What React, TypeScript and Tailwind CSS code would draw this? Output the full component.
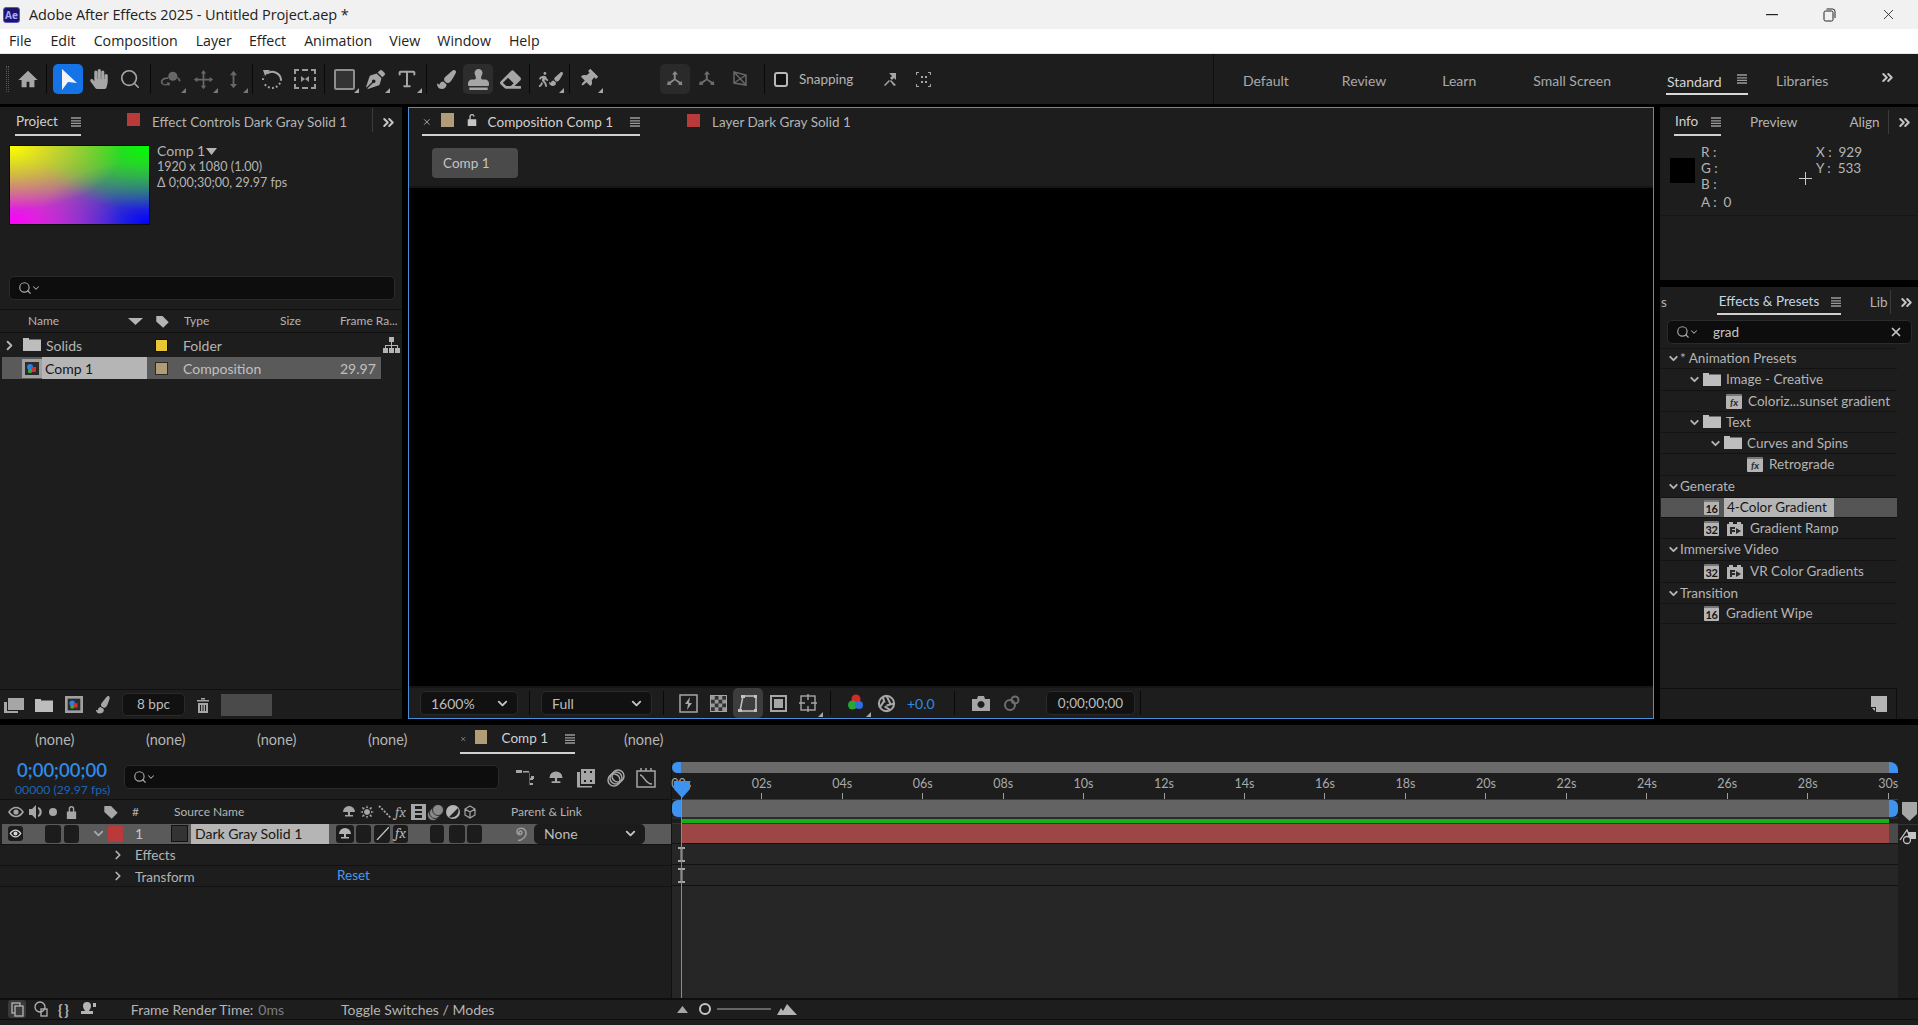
import type { ReactNode } from 'react'
import { ChevronDown, ChevronRight, ChevronsRight, Search, Type, X } from 'lucide-react'
import { FaEraser, FaHandPaper, FaPaintBrush, FaPenNib, FaStamp, FaThumbtack, FaWalking } from 'react-icons/fa'

const PANEL_TEXT = 'text-[#b4b4b4]'

function Ico({ size = 20, vb = '0 0 24 24', className = '', children }: { size?: number; vb?: string; className?: string; children: ReactNode }) {
  return (
    <svg width={size} height={size} viewBox={vb} fill="currentColor" className={`shrink-0 ${className}`}>
      {children}
    </svg>
  )
}

function Ham({ className = '' }: { className?: string }) {
  return (
    <svg width="10" height="10" viewBox="0 0 10 10" className={`shrink-0 ${className}`} stroke="#9a9a9a" strokeWidth="1.3">
      <path d="M0 1h10M0 3.8h10M0 6.4h10M0 9h10" />
    </svg>
  )
}

function Sep({ className = '', short }: { className?: string; short?: boolean }) {
  return <div className={`w-px ${short ? 'h-[24px]' : 'h-[30px]'} bg-[#090909] shrink-0 ${className}`} />
}

function Tool({ className = '', tri, dim, children }: { className?: string; tri?: boolean; dim?: boolean; children: ReactNode }) {
  return (
    <div className={`relative w-[30px] h-[30px] flex items-center justify-center shrink-0 rounded-[5px] ${dim ? 'text-[#686868]' : 'text-[#a6a6a6]'} ${className}`}>
      {children}
      {tri && (
        <svg width="5" height="5" viewBox="0 0 5 5" className="absolute right-0 bottom-[1px]" fill={dim ? '#777' : '#a6a6a6'}>
          <polygon points="5,0 5,5 0,5" />
        </svg>
      )}
    </div>
  )
}

function Folder({ className = '' }: { className?: string }) {
  return (
    <svg width="18" height="14" viewBox="0 0 18 14" fill="#bdbdbd" className={`shrink-0 ${className}`}>
      <path d="M0 1h6v1.500h12V14H0z" />
    </svg>
  )
}

function Badge({ text }: { text: string }) {
  return (
    <span className="w-[15px] h-[15px] shrink-0 bg-[#b4b4b4] rounded-[1px] text-[#141414] text-[11px] leading-[13px] font-bold text-center tracking-[-0.5px] border-t-2 border-[#777]">
      {text}
    </span>
  )
}

function FxBox({ className = '' }: { className?: string }) {
  return (
    <span className={`w-[16px] h-[15px] shrink-0 bg-[#b4b4b4] rounded-[1px] text-[#2a2a2a] text-[10px] leading-[13px] italic font-bold text-center border-t-2 border-[#777] ${className}`}>
      fx
    </span>
  )
}

function PresetIcon({ className = '' }: { className?: string }) {
  return (
    <svg width="16" height="15" viewBox="0 0 16 15" className={`shrink-0 ${className}`}>
      <path d="M0 3h2V1h4v2h4V1h4v2h2v12H0z" fill="#b4b4b4" />
      <path d="M3 6h5v2H5v1h3v2H5v2H3z" fill="#2a2a2a" />
      <polygon points="9,7 14,10 9,13" fill="#2a2a2a" />
    </svg>
  )
}

function CompIcon({ className = '' }: { className?: string }) {
  return (
    <svg width="20" height="19" viewBox="0 0 20 19" className={`shrink-0 ${className}`}>
      <rect width="20" height="19" fill="#a0a0a0" />
      <rect x="3" y="3" width="14" height="13" fill="#2b2b2b" />
      <circle cx="8" cy="8" r="3" fill="#2f7fe0" />
      <rect x="9" y="8" width="5" height="5" fill="#d23030" />
      <circle cx="8" cy="12" r="2.200" fill="#35a845" />
    </svg>
  )
}

function Swatch({ color, className = '' }: { color: string; className?: string }) {
  return <div className={`shrink-0 ${color} ${className}`} />
}

function Dropdown({ className = '', label }: { className?: string; label: string }) {
  return (
    <div className={`shrink-0 flex items-center justify-between pl-[10px] pr-[7px] rounded-[5px] text-[14px] text-[#bdbdbd] ${className}`}>
      <span>{label}</span>
      <ChevronDown size={15} strokeWidth={3} className="text-[#c4c4c4]" />
    </div>
  )
}

function TitleBar() {
  return (
    <div className="h-[29px] bg-[#f1f1f1] flex items-center shrink-0 font-['Open_Sans',sans-serif] text-[#222]">
      <div className="w-[17px] h-[16px] ml-[3px] rounded-[3px] bg-[#1c1466] border border-[#5d55c8] text-[#a9a6ff] text-[10px] font-bold leading-[14px] text-center">Ae</div>
      <span className="ml-[9px] text-[14.500px] tracking-[-0.1px]">Adobe After Effects 2025 - Untitled Project.aep *</span>
      <div className="ml-auto flex items-center">
        <svg width="12" height="2" className="mr-[45px]"><rect width="12" height="1.200" fill="#222" /></svg>
        <svg width="13" height="14" viewBox="0 0 13 14" fill="none" stroke="#222" className="mr-[44px]">
          <rect x="1" y="3" width="9" height="10" rx="1.500" />
          <path d="M3.500 1h6a2.500 2.500 0 0 1 2.500 2.500V10" />
        </svg>
        <X size={17} strokeWidth={1.200} className="mr-[21px] text-[#222]" />
      </div>
    </div>
  )
}

const MENU = [
  ['File', 'ml-[9px]'],
  ['Edit', 'ml-[19px]'],
  ['Composition', 'ml-[18px]'],
  ['Layer', 'ml-[18px]'],
  ['Effect', 'ml-[17px]'],
  ['Animation', 'ml-[18px]'],
  ['View', 'ml-[17px]'],
  ['Window', 'ml-[17px]'],
  ['Help', 'ml-[18px]'],
]

function MenuBar() {
  return (
    <div className="h-[25px] bg-white border-b border-[#e6e6e6] flex items-center shrink-0 font-['Open_Sans',sans-serif] text-[14.200px] text-[#222] pb-[1px]">
      {MENU.map(([label, cls]) => (
        <span key={label} className={cls}>{label}</span>
      ))}
    </div>
  )
}

function Axis({ dim }: { dim?: boolean }) {
  return (
    <Ico size={20} vb="0 0 20 20" className={dim ? 'text-[#6f6f6f]' : 'text-[#8a8a8a]'}>
      <path d="M10 2l3 3.500h-2.300V10l4.800 3 1-1.300.9 4.300-4.400-.2 1-1.400L10 11.300l-4.500 3.100 1 1.400L2.100 16l.9-4.300 1 1.300 4.800-3V5.500H7z" />
    </Ico>
  )
}

function Toolbar() {
  return (
    <div className="h-[50px] bg-[#1d1d1d] flex items-center shrink-0 text-[#a6a6a6]">
      <div className="ml-[6px] w-[3px] h-[26px] border-l border-r border-dotted border-[#555] shrink-0" />
      <Tool className="ml-[4px]">
        <Ico size={22}><path d="M12 3 1.500 13H5v8h5.500v-6h3v6H19v-8h3.500z" /></Ico>
      </Tool>
      <Sep className="ml-[3px]" />
      <Tool className="ml-[6px] bg-[#1473e6]">
        <Ico size={24} className="text-[#f4f4f4]"><polygon points="6,2 21,16 12,15 6,23" /></Ico>
      </Tool>
      <Tool className="ml-[1px]"><FaHandPaper size={20} /></Tool>
      <Tool className="ml-[1px]"><Search size={22} strokeWidth={1.800} /></Tool>
      <Sep className="ml-[5px]" />
      <Tool tri dim className="ml-[5px]">
        <Ico size={22}>
          <circle cx="14" cy="9" r="5" />
          <path d="M9 12c-5 0-7 2-6 4s4 2 5 1l-1-1.500 4 .5-1 4-1-1.500C5 20 0 18 1 14c1-3 4-4 8-4zM19 10c3 1 4 3 3 5l-2-1c.5-1 0-2-2-3z" />
        </Ico>
      </Tool>
      <Tool tri dim className="ml-[2px]">
        <Ico size={21}><path d="M12 1l3 4h-2v6h6V9l4 3-4 3v-2h-6v6h2l-3 4-3-4h2v-6H5v2l-4-3 4-3v2h6V5H9z" /></Ico>
      </Tool>
      <Tool tri dim>
        <Ico size={21}><path d="M12 2l4 5h-3v10h3l-4 5-4-5h3V7H8z" /></Ico>
      </Tool>
      <Sep className="ml-[4px]" />
      <Tool className="ml-[4px]">
        <svg width="24" height="24" viewBox="0 0 24 24" fill="none" stroke="#a6a6a6" strokeWidth="2">
          <path d="M7 6.500A9 9 0 0 1 21 12" />
          <path d="M21 12a9 9 0 0 1-17 4" strokeDasharray="1.800 2.200" />
          <path d="M3 13a9 9 0 0 1 1-4" strokeDasharray="1.800 2.200" />
          <polygon points="3,3 10,3 5,9" fill="#a6a6a6" stroke="none" />
        </svg>
      </Tool>
      <Tool className="ml-[3px]">
        <svg width="24" height="22" viewBox="0 0 24 22" fill="#9a9a9a">
          <path d="M1 1h5v2H3v3H1zM18 1h5v5h-2V3h-3zM1 16h2v3h3v2H1zM21 16h2v5h-5v-2h3zM9 1h6v2H9zM9 19h6v2H9zM1 9h2v4H1zM21 9h2v4h-2z" />
          <path d="M8 8l4 3-4 3zM16 8l-4 3 4 3z" />
        </svg>
      </Tool>
      <Sep className="ml-[4px]" />
      <Tool tri className="ml-[4px]">
        <div className="w-[21px] h-[21px] bg-[#333] border-2 border-[#8e8e8e] rounded-[2px]" />
      </Tool>
      <Tool tri className="ml-[1px]"><FaPenNib size={19} /></Tool>
      <Tool tri className="ml-[2px]"><Type size={22} strokeWidth={2.200} /></Tool>
      <Sep className="ml-[4px]" />
      <Tool className="ml-[4px]"><FaPaintBrush size={19} /></Tool>
      <Tool className="ml-[2px] bg-[#2d2d2d]"><FaStamp size={21} /></Tool>
      <Tool className="ml-[2px]"><FaEraser size={21} /></Tool>
      <Sep className="ml-[4px]" />
      <Tool tri className="ml-[4px]">
        <FaWalking size={15} className="mr-[-2px]" />
        <FaPaintBrush size={14} />
      </Tool>
      <Sep className="ml-[5px]" />
      <Tool tri className="ml-[3px]"><FaThumbtack size={18} className="rotate-45" /></Tool>

      <Tool className="ml-[57px] bg-[#2a2a2a]"><Axis /></Tool>
      <Tool className="ml-[2px]"><Axis dim /></Tool>
      <Tool className="ml-[3px]">
        <svg width="18" height="18" viewBox="0 0 18 18" fill="none" stroke="#666" strokeWidth="1.500">
          <path d="M3 2l12 3v10L3 13zM3 13l12-8M3 2l12 13" />
        </svg>
      </Tool>
      <Sep className="ml-[9px]" />
      <div className="ml-[9px] w-[14px] h-[15px] bg-[#111] border-2 border-[#b8b8b8] rounded-[3px] shrink-0" />
      <span className={`ml-[11px] w-[60px] text-[13.5px] ${PANEL_TEXT}`}>Snapping</span>
      <Tool className="ml-[16px]">
        <Ico size={16} vb="0 0 16 16"><path d="M2 14l5-5 1 1-5 5zM14 14l-5-5-1 1 4 5zM7 2h7v7l-2-2-2 2-2-2 2-2z" /></Ico>
      </Tool>
      <Tool className="ml-[3px]">
        <Ico size={15} vb="0 0 15 15">
          <path d="M0 0h3v1H1v2H0zM12 0h3v3h-1V1h-2zM0 12h1v2h2v1H0zM14 12h1v3h-3v-1h2zM5 4h2v2H5zM9 4h2v2H9zM5 9h2v2H5zM9 9h2v2H9z" />
        </Ico>
      </Tool>

      <div className="ml-auto w-[705px] h-full pt-[3px] border-l border-[#0e0e0e] flex items-center text-[14px] text-[#a9a9a9] shrink-0">
        <span className="ml-[29px]">Default</span>
        <span className="ml-[53px]">Review</span>
        <span className="ml-[56px]">Learn</span>
        <span className="ml-[57px]">Small Screen</span>
        <div className="ml-[55px] w-[82px] h-[26px] mt-[3px] flex items-center justify-between border-b-2 border-[#d8d8d8] pl-[1px] text-[#d2d2d2] shrink-0">
          <span>Standard</span>
          <Ham className="mb-[4px] mr-[1px]" />
        </div>
        <span className="ml-[28px]">Libraries</span>
        <ChevronsRight size={17} strokeWidth={2.800} className="ml-[51px] mb-[6px] text-[#c4c4c4]" />
      </div>
    </div>
  )
}

function PanelTabs({ children }: { children: ReactNode }) {
  return <div className={`h-[29px] flex items-start shrink-0 text-[13.5px] ${PANEL_TEXT}`}>{children}</div>
}

function ActiveTab({ className = '', children }: { className?: string; children: ReactNode }) {
  return (
    <div className={`flex items-center border-b-2 border-[#d0d0d0] text-[#d0d0d0] shrink-0 ${className}`}>
      {children}
    </div>
  )
}

function ProjectPanel() {
  return (
    <div className="w-[402px] h-[612px] bg-[#1d1d1d] flex flex-col shrink-0">
      <PanelTabs>
        <ActiveTab className="h-[29px] pt-[2px] ml-[15px] w-[66px] pl-[1px] justify-between">
          <span>Project</span>
          <Ham />
        </ActiveTab>
        <div className="ml-[46px] h-[30px] flex items-center">
          <Swatch color="bg-[#b83a3a]" className="w-[13px] h-[13px] mb-[5px]" />
          <span className="ml-[12px]">Effect Controls Dark Gray Solid 1</span>
        </div>
        <div className="ml-[25px] mt-[1px] w-px h-[24px] bg-[#3a3a3a]" />
        <ChevronsRight size={17} strokeWidth={2.800} className="ml-[7px] mt-[7px] text-[#c4c4c4]" />
      </PanelTabs>
      <div className="h-[140px] flex shrink-0 pt-[9px]">
        <div className="ml-[9px] w-[141px] h-[80px] shrink-0 border border-[#0c0c0c] bg-[#808080] bg-[radial-gradient(ellipse_at_0%_0%,#ffff00_0%,transparent_58%),radial-gradient(ellipse_at_100%_0%,#00ff00_0%,transparent_58%),radial-gradient(ellipse_at_0%_100%,#ff00ff_0%,transparent_58%),radial-gradient(ellipse_at_100%_100%,#0000ff_0%,transparent_58%)]" />
        <div className={`ml-[7px] -mt-[2px] text-[12.5px] leading-[16px] ${PANEL_TEXT}`}>
          <div className="flex items-center text-[14px]">Comp 1<svg width="11" height="7" className="ml-[1px]" fill="#b4b4b4"><polygon points="0,0 11,0 5.500,7" /></svg></div>
          <div>1920 x 1080 (1.00)</div>
          <div>Δ 0;00;30;00, 29.97 fps</div>
        </div>
      </div>
      <div className="ml-[9px] w-[386px] h-[24px] rounded-[5px] bg-[#0d0d0d] border border-[#2a2a2a] flex items-center pl-[8px] shrink-0 text-[#a6a6a6]">
        <Search size={14} />
        <ChevronDown size={10} strokeWidth={2.500} className="ml-[-1px]" />
      </div>
      <div className={`mt-[9px] h-[24px] border-t border-b border-[#101010] flex items-center shrink-0 text-[12px] ${PANEL_TEXT}`}>
        <span className="ml-[28px] w-[100px]">Name</span>
        <svg width="15" height="7" fill="#b4b4b4"><polygon points="0,0 15,0 7.500,7" /></svg>
        <Ico size={15} className="ml-[12px]"><path d="M2 3h10l10 10-9 9L2 12z" /></Ico>
        <span className="ml-[14px] w-[96px]">Type</span>
        <span className="w-[60px]">Size</span>
        <span>Frame Ra...</span>
      </div>
      <div className={`h-[24px] flex items-center shrink-0 text-[14px] ${PANEL_TEXT}`}>
        <ChevronRight size={15} strokeWidth={3} className="ml-[2px]" />
        <Folder className="ml-[6px] mb-[2px]" />
        <span className="ml-[5px] w-[109px]">Solids</span>
        <Swatch color="bg-[#e8c832]" className="w-[13px] h-[13px] border border-[#111]" />
        <span className="ml-[15px] w-[200px]">Folder</span>
        <svg width="17" height="16" viewBox="0 0 17 16" fill="#b4b4b4">
          <path d="M6 0h5v5H9v3h6v3h2v5h-5v-5h2V9H9v2h2v5H6v-5h2V9H3v2h2v5H0v-5h2V8h6V5H6z" />
        </svg>
      </div>
      <div className="ml-[2px] w-[379px] h-[22px] bg-[#5a5a5a] flex items-center shrink-0 text-[14px] text-[#c0c0c0]">
        <CompIcon className="ml-[20px]" />
        <div className="w-[105px] h-full bg-[#b5b5b5] text-[#151515] flex items-center pl-[3px] shrink-0">Comp 1</div>
        <Swatch color="bg-[#b09d77]" className="w-[13px] h-[13px] ml-[8px] border border-[#2a2a2a]" />
        <span className="ml-[15px] w-[157px]">Composition</span>
        <span>29.97</span>
      </div>
      <div className="mt-auto h-[30px] border-t border-[#101010] flex items-center shrink-0 text-[#a6a6a6]">
        <Ico size={20} className="ml-[4px]" vb="0 0 20 20"><path d="M0 7h3v9h11v2H0zM4 3h16v12H4z" /></Ico>
        <Folder className="ml-[11px]" />
        <CompIcon className="ml-[11px] scale-90" />
        <FaPaintBrush size={16} className="ml-[11px] rotate-[-10deg]" />
        <div className="ml-[11px] w-[63px] h-[23px] bg-[#111] border border-[#2a2a2a] rounded-[5px] text-[13.5px] text-[#bdbdbd] flex items-center justify-center shrink-0">8 bpc</div>
        <Ico size={16} vb="0 0 16 16" className="ml-[10px]"><path d="M2 3h12v1.500H2zM6 1h4v1.500H6zM3 6h10v10H3zM5 8v6h1V8zM7.500 8v6h1V8zM10 8v6h1V8z" /></Ico>
        <div className="ml-[10px] w-[51px] h-[22px] bg-[#4a4a4a] shrink-0" />
      </div>
    </div>
  )
}

function CompPanel() {
  return (
    <div className="w-[1246px] h-[612px] bg-[#1d1d1d] border border-[#4b8fd8] flex flex-col shrink-0">
      <PanelTabs>
        <ActiveTab className="h-[28px] pt-[2px] ml-[13px] w-[218px]">
          <X size={10} strokeWidth={2.500} className="ml-[0px] text-[#a6a6a6]" />
          <Swatch color="bg-[#b09d77]" className="w-[13px] h-[14px] ml-[9px] mb-[4px]" />
          <Ico size={12} vb="0 0 12 14" className="ml-[12px] mb-[4px] text-[#c4c4c4]"><path d="M1 6h10v8H1zM3 6V3a3 3 0 0 1 6 0h-1.500a1.500 1.500 0 0 0-3 0v3z" /></Ico>
          <span className="ml-[10px]">Composition Comp 1</span>
          <Ham className="ml-[17px]" />
        </ActiveTab>
        <div className="ml-[47px] h-[29px] flex items-center">
          <Swatch color="bg-[#b83a3a]" className="w-[13px] h-[13px] mb-[5px]" />
          <span className="ml-[12px]">Layer Dark Gray Solid 1</span>
        </div>
      </PanelTabs>
      <div className="h-[49px] shrink-0 pt-[11px] pl-[23px]">
        <div className="w-[86px] h-[30px] bg-[#4a4a4a] rounded-[4px] flex items-center pl-[11px] text-[13.5px] text-[#c4c4c4]">Comp 1</div>
      </div>
      <div className="h-[2px] bg-[#151515] shrink-0" />
      <div className="flex-1 bg-black" />
      <div className="h-[2px] bg-[#151515] shrink-0" />
      <div className="h-[30px] flex items-center shrink-0 text-[#a6a6a6]">
        <Dropdown label="1600%" className="h-[24px] bg-[#111] border border-[#2a2a2a] ml-[11px] w-[98px]" />
        <Sep short className="ml-[11px]" />
        <Dropdown label="Full" className="h-[24px] bg-[#111] border border-[#2a2a2a] ml-[11px] w-[111px]" />
        <Sep short className="ml-[11px]" />
        <Tool className="ml-[9px]">
          <svg width="19" height="19" viewBox="0 0 19 19" fill="none" stroke="#a6a6a6" strokeWidth="1.500">
            <rect x="1" y="1" width="17" height="17" />
            <path d="M11 3L6 10h3l-1 6 5-7h-3z" fill="#a6a6a6" stroke="none" />
          </svg>
        </Tool>
        <Tool>
          <svg width="17" height="17" viewBox="0 0 4 4" className="border border-[#a6a6a6]">
            <rect width="4" height="4" fill="#333" />
            <path d="M0 0h1v1H0zM2 0h1v1H2zM1 1h1v1H1zM3 1h1v1H3zM0 2h1v1H0zM2 2h1v1H2zM1 3h1v1H1zM3 3h1v1H3z" fill="#999" />
          </svg>
        </Tool>
        <Tool className="bg-[#3d3d3d]">
          <svg width="20" height="19" viewBox="0 0 20 19" fill="none" stroke="#c2c2c2" strokeWidth="1.500">
            <path d="M5 2h13v15H2z" />
            <path d="M3 1h4v3H3zM16 1h3v3h-3zM0 15h4v3H0zM16 15h3v3h-3z" fill="#c2c2c2" stroke="none" />
          </svg>
        </Tool>
        <Tool>
          <div className="w-[17px] h-[17px] border-2 border-[#a6a6a6] flex items-center justify-center"><div className="w-[9px] h-[9px] bg-[#a6a6a6]" /></div>
        </Tool>
        <Tool tri>
          <svg width="18" height="18" viewBox="0 0 18 18" fill="none" stroke="#a6a6a6" strokeWidth="1.400">
            <rect x="2" y="2" width="14" height="14" />
            <path d="M9 0v6M9 12v6M0 9h6M12 9h6" />
          </svg>
        </Tool>
        <Sep short className="ml-[7px]" />
        <Tool tri className="ml-[10px]">
          <svg width="20" height="20" viewBox="0 0 20 20">
            <circle cx="10" cy="6" r="4.500" fill="#d42a2a" />
            <circle cx="6.500" cy="12" r="4.500" fill="#27a537" />
            <circle cx="13" cy="12" r="4" fill="#2b6fe0" />
          </svg>
        </Tool>
        <Tool>
          <svg width="19" height="19" viewBox="0 0 20 20" fill="none" stroke="#a6a6a6" strokeWidth="2.200">
            <circle cx="10" cy="10" r="8" />
            <path d="M10 2l4 8M18 10l-8 2M14 17l-6-4M3 14l4-6M6 3l2 6" />
          </svg>
        </Tool>
        <span className="ml-[6px] w-[40px] text-[14px] text-[#2f8be6]">+0.0</span>
        <Sep short className="ml-[7px]" />
        <Tool className="ml-[11px]">
          <svg width="18" height="15" viewBox="0 0 18 15" fill="#a6a6a6">
            <path fillRule="evenodd" d="M0 3h5l1-3h6l1 3h5v12H0zM9 5a3.500 3.500 0 1 0 .01 0z" />
          </svg>
        </Tool>
        <Tool className="ml-[1px]">
          <svg width="18" height="18" viewBox="0 0 18 18" fill="none" stroke="#6e6e6e" strokeWidth="2">
            <circle cx="7" cy="11" r="5" />
            <circle cx="12" cy="6" r="3.500" />
          </svg>
        </Tool>
        <div className="ml-[19px] w-[89px] h-[24px] bg-[#111] border border-[#2a2a2a] rounded-[5px] flex items-center justify-center text-[13.500px] text-[#bdbdbd] shrink-0">0;00;00;00</div>
        <Sep short className="ml-[5px]" />
      </div>
    </div>
  )
}

function InfoPanel() {
  return (
    <div className="h-[173px] bg-[#1d1d1d] flex flex-col shrink-0">
      <PanelTabs>
        <ActiveTab className="h-[29px] pt-[2px] ml-[14px] w-[47px] pl-[1px] justify-between">
          <span>Info</span>
          <Ham />
        </ActiveTab>
        <span className="ml-[29px] h-[28px] leading-[30px]">Preview</span>
        <span className="ml-[52px] h-[28px] leading-[30px]">Align</span>
        <div className="ml-[8px] mt-[3px] w-px h-[24px] bg-[#3a3a3a]" />
        <ChevronsRight size={17} strokeWidth={2.800} className="ml-[7px] mt-[7px] text-[#c4c4c4]" />
      </PanelTabs>
      <div className={`relative h-[80px] flex text-[13.5px] leading-[16px] pt-[8px] border-b border-[#161616] ${PANEL_TEXT}`}>
        <div className="ml-[10px] mt-[14px] w-[25px] h-[25px] bg-black shrink-0" />
        <div className="ml-[6px] w-[115px] shrink-0">
          <div>R :</div>
          <div>G :</div>
          <div>B :</div>
          <div className="mt-[2px]">A :&nbsp; 0</div>
        </div>
        <div>
          <div>X :&nbsp; 929</div>
          <div>Y :&nbsp; 533</div>
        </div>
        <svg width="13" height="13" className="absolute left-[139px] top-[36px]" stroke="#c8c8c8"><path d="M6.500 0v13M0 6.500h13" /></svg>
      </div>
    </div>
  )
}

const TREE = [
  { h: 'h-[20px]', cls: 'pl-[6px]', chev: true, text: '* Animation Presets', textCls: '' },
  { h: 'h-[22px]', cls: 'pl-[27px]', chev: true, folder: true, text: 'Image - Creative', textCls: 'ml-[5px]' },
  { h: 'h-[21px]', cls: 'pl-[65px]', fx: true, text: 'Coloriz...sunset gradient', textCls: 'ml-[6px]' },
  { h: 'h-[21px]', cls: 'pl-[27px]', chev: true, folder: true, text: 'Text', textCls: 'ml-[5px]' },
  { h: 'h-[21px]', cls: 'pl-[48px]', chev: true, folder: true, text: 'Curves and Spins', textCls: 'ml-[5px]' },
  { h: 'h-[22px]', cls: 'pl-[86px]', fx: true, text: 'Retrograde', textCls: 'ml-[6px]' },
  { h: 'h-[22px]', cls: 'pl-[6px]', chev: true, text: 'Generate', textCls: '' },
  { h: 'h-[20px]', cls: 'pl-[43px]', badge: '16', text: '4-Color Gradient', selected: true },
  { h: 'h-[21px]', cls: 'pl-[43px]', badge: '32', preset: true, text: 'Gradient Ramp', textCls: 'ml-[7px]' },
  { h: 'h-[22px]', cls: 'pl-[6px]', chev: true, text: 'Immersive Video', textCls: '' },
  { h: 'h-[22px]', cls: 'pl-[43px]', badge: '32', preset: true, text: 'VR Color Gradients', textCls: 'ml-[7px]' },
  { h: 'h-[21px]', cls: 'pl-[6px]', chev: true, text: 'Transition', textCls: '' },
  { h: 'h-[20px]', cls: 'pl-[43px]', badge: '16', text: 'Gradient Wipe', textCls: 'ml-[7px]' },
]

function EffectsPanel() {
  return (
    <div className="flex-1 bg-[#1d1d1d] flex flex-col min-h-0">
      <PanelTabs>
        <span className="ml-[1px] h-[28px] leading-[30px]">s</span>
        <ActiveTab className="h-[28px] pt-[3px] ml-[50px] w-[124px] pl-[2px] justify-between">
          <span className="text-[#c3d5e6]">Effects &amp; Presets</span>
          <Ham />
        </ActiveTab>
        <span className="ml-[29px] w-[20px] h-[28px] leading-[30px]">Lib</span>
        <div className="mt-[3px] w-px h-[24px] bg-[#3a3a3a]" />
        <ChevronsRight size={17} strokeWidth={2.800} className="ml-[7px] mt-[7px] text-[#c4c4c4]" />
      </PanelTabs>
      <div className="ml-[7px] mr-[6px] mt-[4px] h-[24px] rounded-[5px] bg-[#0d0d0d] border border-[#2a2a2a] flex items-center pl-[8px] pr-[8px] shrink-0 text-[#a6a6a6]">
        <Search size={14} />
        <ChevronDown size={10} strokeWidth={2.500} className="ml-[-1px]" />
        <span className="ml-[14px] text-[13.5px] text-[#c4c4c4]">grad</span>
        <X size={14} strokeWidth={3} className="ml-auto text-[#c4c4c4]" />
      </div>
      <div className="mt-[4px] w-[236px] ml-[1px] border-t border-[#121212] text-[13.500px] text-[#b4b4b4]">
        {TREE.map((row) => (
          <div key={row.text} className={`${row.h} ${row.cls} ${row.selected ? 'bg-[#555]' : ''} flex items-center border-b border-[#121212]`}>
            {row.chev && <ChevronDown size={13} strokeWidth={3.500} className="shrink-0" />}
            {row.folder && <Folder className="ml-[2px] mb-[2px]" />}
            {row.fx && <FxBox />}
            {row.badge && <Badge text={row.badge} />}
            {row.preset && <PresetIcon className="ml-[8px]" />}
            {row.selected ? (
              <span className="ml-[5px] h-full w-[110px] bg-[#b5b5b5] text-[#161616] pl-[3px] flex items-center">{row.text}</span>
            ) : (
              <span className={row.textCls}>{row.text}</span>
            )}
          </div>
        ))}
      </div>
      <div className="mt-auto w-[237px] h-[31px] border-t border-r border-[#0e0e0e] flex items-center justify-end pr-[9px] shrink-0">
        <svg width="16" height="16" viewBox="0 0 16 16" fill="#b4b4b4">
          <path d="M0 0h16v16H5V11H0zM1 12h3v3z" />
        </svg>
      </div>
    </div>
  )
}

function TimelineTabs() {
  return (
    <div className={`h-[35px] flex items-start shrink-0 text-[14.500px] ${PANEL_TEXT}`}>
      <span className="ml-[35px] w-[111px] leading-[30px]">(none)</span>
      <span className="w-[111px] leading-[30px]">(none)</span>
      <span className="w-[111px] leading-[30px]">(none)</span>
      <span className="w-[92px] leading-[30px]">(none)</span>
      <div className="h-[29px] w-[115px] flex items-center border-b-2 border-[#d0d0d0] text-[13.5px] text-[#d0d0d0] shrink-0">
        <X size={10} strokeWidth={2.500} className="text-[#a6a6a6]" />
        <Swatch color="bg-[#b09d77]" className="ml-[8px] mb-[3px] w-[12px] h-[14px]" />
        <span className="ml-[15px]">Comp 1</span>
        <Ham className="ml-[17px]" />
      </div>
      <span className="ml-[49px] leading-[30px]">(none)</span>
    </div>
  )
}

function SwitchBox({ className = '', children }: { className?: string; children?: ReactNode }) {
  return <div className={`bg-[#1c1c1c] rounded-[3px] flex items-center justify-center shrink-0 text-[#b4b4b4] ${className}`}>{children}</div>
}

function ShyIcon({ className = '' }: { className?: string }) {
  return (
    <Ico size={16} vb="0 0 16 16" className={className}>
      <path d="M2 8a6 6 0 0 1 12 0H9v3h3v1.500H4V11h3V8z" />
    </Ico>
  )
}

function LayerControls() {
  return (
    <>
      <div className="h-[39px] flex items-center shrink-0">
        <div className="ml-[15px] w-[100px] pb-[2px] shrink-0 leading-none">
          <div className="text-[18.500px] font-semibold text-[#2f8be6] pl-[2px]">0;00;00;00</div>
          <div className="mt-[4px] text-[12.200px] text-[#1c65b5]">00000 (29.97 fps)</div>
        </div>
        <div className="ml-[9px] mb-[6px] w-[375px] h-[24px] rounded-[5px] bg-[#0d0d0d] border border-[#2a2a2a] flex items-center pl-[8px] shrink-0 text-[#a6a6a6]">
          <Search size={14} />
          <ChevronDown size={10} strokeWidth={2.500} className="ml-[-1px]" />
        </div>
        <div className="flex items-center mb-[4px] text-[#a6a6a6]">
          <Tool className="ml-[12px]">
            <svg width="20" height="18" viewBox="0 0 20 18" fill="#a6a6a6"><path d="M0 1h6v3H0zM7 2h6v1.500h1V9h3v2h-3v3h3v2h-3.500V3.500H7zM15 7h3v3h-3z" /></svg>
          </Tool>
          <Tool><ShyIcon className="scale-110" /></Tool>
          <Tool>
            <svg width="20" height="20" viewBox="0 0 20 20" fill="#a6a6a6"><path d="M5 1h14v15H5zM1 4h3v14h12v1.500H1zM8 3v2h2V3zM14 3v2h2V3zM8 12v2h2v-2zM14 12v2h2v-2zM8 7h8v3H8z" /></svg>
          </Tool>
          <Tool>
            <svg width="20" height="20" viewBox="0 0 20 20" fill="none" stroke="#a6a6a6" strokeWidth="1.500"><circle cx="8" cy="12" r="6" /><circle cx="10" cy="10" r="6" /><circle cx="12" cy="8" r="6" /></svg>
          </Tool>
          <Tool>
            <svg width="20" height="20" viewBox="0 0 20 20" fill="none" stroke="#a6a6a6" strokeWidth="1.500"><rect x="1" y="3" width="18" height="16" /><path d="M4 7c4 0 5 9 12 9M5 0v3M10 0v3M15 0v3" /></svg>
          </Tool>
        </div>
      </div>
      <div className={`h-[25px] border-t border-[#101010] flex items-center shrink-0 text-[12px] ${PANEL_TEXT}`}>
        <svg width="16" height="12" viewBox="0 0 16 12" fill="none" stroke="#a6a6a6" strokeWidth="1.600" className="ml-[8px]"><path d="M1 6c4-6 10-6 14 0-4 6-10 6-14 0z" /><circle cx="8" cy="6" r="1.800" fill="#a6a6a6" /></svg>
        <Ico size={14} vb="0 0 14 14" className="ml-[5px] text-[#a6a6a6]"><path d="M7 0v14L3 10H0V4h3zM9 2c5 1 5 9 0 10v-2c2-1 2-5 0-6z" /></Ico>
        <div className="ml-[6px] w-[8px] h-[8px] rounded-full bg-[#a6a6a6]" />
        <Ico size={13} vb="0 0 12 14" className="ml-[8px] text-[#a6a6a6]"><path d="M1 6h10v8H1zM3 6V3a3 3 0 0 1 6 0v3H7.500V3a1.500 1.500 0 0 0-3 0v3z" /></Ico>
        <Ico size={16} className="ml-[25px] text-[#a6a6a6]"><path d="M2 3h10l10 10-9 9L2 12z" /></Ico>
        <span className="ml-[13px] w-[42px]">#</span>
        <span className="w-[167px]">Source Name</span>
        <ShyIcon className="text-[#a6a6a6]" />
        <Ico size={14} vb="0 0 14 14" className="ml-[3px] text-[#a6a6a6]"><path d="M7 0l1 3h-2zM7 14l1-3H6zM0 7l3-1v2zM14 7l-3-1v2zM2 2l3 1-2 2zM12 12l-3-1 2-2zM12 2l-1 3-2-2zM2 12l1-3 2 2zM7 4a3 3 0 1 0 .01 0z" /></Ico>
        <svg width="14" height="14" viewBox="0 0 14 14" stroke="#a6a6a6" strokeWidth="1.800" strokeDasharray="2 1.500" className="ml-[4px]"><path d="M1 1l12 12" /></svg>
        <span className="ml-[3px] w-[15px] italic font-serif text-[15px] text-[#a6a6a6]">fx</span>
        <svg width="15" height="16" viewBox="0 0 15 16" fill="#a6a6a6" className="ml-[1px]"><path d="M0 0h15v16H0zM4 2v3h7V2zM4 7v2h7V7zM4 11v3h7v-3z" /></svg>
        <svg width="17" height="17" viewBox="0 0 17 17" className="ml-[1px]" fill="#8a8a8a" stroke="#1d1d1d" strokeWidth="0.800"><circle cx="6" cy="11" r="5.500" /><circle cx="8" cy="9" r="5.500" /><circle cx="11" cy="6" r="5.500" /></svg>
        <svg width="14" height="14" viewBox="0 0 14 14" className="ml-[2px]"><circle cx="7" cy="7" r="7" fill="#b4b4b4" /><path d="M12 3A7 7 0 0 1 3 12z" fill="#222" /></svg>
        <svg width="14" height="14" viewBox="0 0 14 14" fill="none" stroke="#a6a6a6" strokeWidth="1.200" className="ml-[3px]"><path d="M7 1l5 3v6l-5 3-5-3V4zM2 4l5 3 5-3M7 7v6" /></svg>
        <span className="ml-[34px] whitespace-nowrap">Parent &amp; Link</span>
      </div>
      <div className="ml-[2px] h-[20px] w-[669px] bg-[#5a5a5a] flex items-center shrink-0 text-[14px] text-[#c4c4c4] pb-[1px]">
        <SwitchBox className="ml-[6px] w-[15px] h-[15px]">
          <svg width="13" height="9" viewBox="0 0 16 12" fill="none" stroke="#d8d8d8" strokeWidth="1.800"><path d="M1 6c4-6 10-6 14 0-4 6-10 6-14 0z" /><circle cx="8" cy="6" r="1.800" fill="#d8d8d8" /></svg>
        </SwitchBox>
        <SwitchBox className="ml-[22px] w-[16px] h-[18px]" />
        <SwitchBox className="ml-[3px] w-[15px] h-[18px]" />
        <ChevronDown size={15} strokeWidth={3} className="ml-[12px] text-[#a6a6a6]" />
        <Swatch color="bg-[#b83a3a]" className="ml-[2px] w-[15px] h-[16px]" />
        <span className="ml-[12px] w-[36px]">1</span>
        <div className="w-[17px] h-[17px] bg-[#333] border border-[#111] shrink-0" />
        <div className="ml-[3px] w-[138px] h-[20px] bg-[#b5b5b5] text-[#161616] pl-[4px] flex items-center shrink-0">Dark Gray Solid 1</div>
        <SwitchBox className="ml-[7px] w-[18px] h-[18px]"><ShyIcon /></SwitchBox>
        <SwitchBox className="ml-[2px] w-[15px] h-[18px]" />
        <SwitchBox className="ml-[3px] w-[16px] h-[18px]">
          <svg width="13" height="13" stroke="#c4c4c4" strokeWidth="1.300"><path d="M1 13L13 0" /></svg>
        </SwitchBox>
        <SwitchBox className="ml-[3px] w-[15px] h-[18px] italic font-serif text-[15px]">fx</SwitchBox>
        <SwitchBox className="ml-[22px] w-[14px] h-[18px]" />
        <SwitchBox className="ml-[5px] w-[16px] h-[18px]" />
        <SwitchBox className="ml-[2px] w-[15px] h-[18px]" />
        <svg width="16" height="17" viewBox="0 0 16 17" fill="none" stroke="#9a9a9a" strokeWidth="1.600" className="ml-[30px]"><path d="M8 9a1.500 1.500 0 1 1 2-1.500c0 3-5 3-5-1 0-4 8-5 9 1 .6 4-4 8-8 8" /></svg>
        <Dropdown label="None" className="ml-[6px] w-[111px] h-[20px] bg-[#1b1b1b]" />
      </div>
      <div className="h-px bg-[#121212] shrink-0" />
      <div className={`h-[21px] flex items-center border-b border-[#121212] shrink-0 text-[13.500px] ${PANEL_TEXT}`}>
        <ChevronRight size={14} strokeWidth={3} className="ml-[111px]" />
        <span className="ml-[10px]">Effects</span>
      </div>
      <div className={`h-[21px] flex items-center border-b border-[#121212] shrink-0 text-[13.500px] ${PANEL_TEXT}`}>
        <ChevronRight size={14} strokeWidth={3} className="ml-[111px]" />
        <span className="ml-[10px] mt-[2px] w-[202px]">Transform</span>
        <span className="text-[#4c97ea] mb-[2px]">Reset</span>
      </div>
    </>
  )
}

const RULER = ['00s', '02s', '04s', '06s', '08s', '10s', '12s', '14s', '16s', '18s', '20s', '22s', '24s', '26s', '28s', '30s']

function IBeam() {
  return (
    <div className="h-[21px] flex items-center pl-[5px] border-b border-[#121212] shrink-0">
      <svg width="9" height="15" viewBox="0 0 9 15" stroke="#a6a6a6" strokeWidth="2" fill="none"><path d="M1 1h7M1 14h7M4.500 1v13" /></svg>
    </div>
  )
}

function TimeGraph() {
  return (
    <div className="relative flex-1 flex min-w-0">
      <div className="w-[1226px] flex flex-col shrink-0">
        <div className="h-[2px] shrink-0" />
        <div className="h-[11px] flex shrink-0">
          <div className="w-[9px] bg-[#3f93f0] rounded-l-[6px]" />
          <div className="flex-1 bg-[#6a6a6a]" />
          <div className="w-[9px] bg-[#3f93f0] rounded-tr-[8px]" />
        </div>
        <div className="h-[26px] flex shrink-0 ml-[-31px] text-[12.500px] text-[#a9a9a9]">
          {RULER.map((t) => (
            <div key={t} className="w-[80.47px] flex flex-col items-center justify-end shrink-0">
              <span className="leading-[15px] mb-[2px]">{t}</span>
              <div className="w-px h-[6px] bg-[#a0a0a0]" />
            </div>
          ))}
        </div>
        <div className="h-[18px] flex shrink-0 border-t border-[#3a3a3a]">
          <div className="w-[9px] bg-[#3f93f0] rounded-l-[6px]" />
          <div className="flex-1 bg-[#636363]" />
          <div className="w-[9px] bg-[#3f93f0] rounded-r-[6px]" />
        </div>
        <div className="h-[2px] bg-[#2a2a2a] shrink-0" />
        <div className="h-[4px] bg-[#1d1d1d] flex shrink-0">
          <div className="ml-[9px] flex-1 mr-[9px] bg-[#12b012]" />
        </div>
        <div className="flex-1 flex flex-col bg-[#262626] border-t border-[#333]">
          <div className="h-[19px] flex shrink-0">
            <div className="ml-[9px] flex-1 bg-[#9c4646]" />
            <div className="w-[9px] bg-[#4a4a4a]" />
          </div>
          <div className="h-px bg-[#121212] shrink-0" />
          <IBeam />
          <IBeam />
        </div>
      </div>
      <div className="flex-1 flex flex-col pt-[42px] pl-[4px]">
        <svg width="15" height="19" viewBox="0 0 15 19" fill="#a6a6a6"><path d="M0 0h15v12l-7.500 7L0 12z" /></svg>
        <div className="h-px bg-[#333] mt-[3px] ml-[-4px]" />
        <svg width="18" height="16" viewBox="0 0 18 16" fill="none" stroke="#c4c4c4" strokeWidth="1.300" className="mt-[4px] ml-[-3px]">
          <path d="M1 11L8 1l2 5" />
          <rect x="9" y="3" width="8" height="7" fill="#c4c4c4" stroke="none" />
          <circle cx="8" cy="11" r="3.500" fill="#1d1d1d" />
        </svg>
      </div>
      {/* playhead sits over the whole graph */}
      <div className="absolute left-[9px] top-[30px] bottom-0 w-px bg-[#4b97ee]" />
      <svg width="16" height="17" viewBox="0 0 16 17" fill="#3f93f0" className="absolute left-[2px] top-[21px]">
        <polygon points="0,0 16,0 16,8 8,17 0,8" />
      </svg>
    </div>
  )
}

function BottomBar() {
  return (
    <div className="h-[21px] border-t-2 border-[#0e0e0e] flex items-center shrink-0 pb-[1px] text-[14px] text-[#b4b4b4]">
      <div className="ml-[8px] w-[18px] h-[18px] rounded-[3px] bg-[#3a3a3a] flex items-center justify-center shrink-0">
        <svg width="13" height="15" viewBox="0 0 13 15" fill="none" stroke="#b4b4b4" strokeWidth="1.300"><rect x="1" y="1" width="8" height="10" /><rect x="4" y="4" width="8" height="10" fill="#3a3a3a" /></svg>
      </div>
      <svg width="15" height="16" viewBox="0 0 15 16" fill="none" stroke="#b4b4b4" strokeWidth="1.300" className="ml-[8px]"><circle cx="6" cy="6" r="5" /><rect x="7" y="8" width="6" height="7" /></svg>
      <span className="ml-[9px] text-[15px] font-bold text-[#b4b4b4] tracking-[-1px]">{'{ }'}</span>
      <Ico size={16} vb="0 0 16 16" className="ml-[13px]"><path d="M6 1a4 4 0 0 1 4 4c0 3-2 4-2 5h4v3H0v-3h4c0-1-2-2-2-5a4 4 0 0 1 4-4zM12 2h3v4h-3z" /></Ico>
      <span className="ml-[34px]">Frame Render Time:</span>
      <span className="ml-[5px] text-[#7d7d7d]">0ms</span>
      <span className="ml-[57px]">Toggle Switches / Modes</span>
      <svg width="11" height="7" className="ml-[183px]" fill="#a6a6a6"><polygon points="5.500,0 11,7 0,7" /></svg>
      <div className="ml-[11px] w-[12px] h-[12px] rounded-full border-2 border-[#c4c4c4]" />
      <div className="ml-[6px] w-[54px] h-[2px] bg-[#666]" />
      <svg width="20" height="11" className="ml-[6px]" fill="#b4b4b4"><polygon points="0,11 4,4 6,7 10,0 20,11" /></svg>
    </div>
  )
}

function Timeline() {
  return (
    <div className="h-[294px] bg-[#1d1d1d] flex flex-col shrink-0">
      <TimelineTabs />
      <div className="flex flex-1 min-h-0">
        <div className="w-[671px] flex flex-col shrink-0">
          <LayerControls />
        </div>
        <div className="w-px bg-[#111] shrink-0" />
        <TimeGraph />
      </div>
      <BottomBar />
    </div>
  )
}

export default function App() {
  return (
    <div className="w-[1918px] h-[1025px] overflow-hidden bg-black flex flex-col whitespace-nowrap font-['Lato',sans-serif]">
      <TitleBar />
      <MenuBar />
      <Toolbar />
      <div className="mt-[3px] h-[612px] flex shrink-0">
        <ProjectPanel />
        <div className="w-[6px] shrink-0" />
        <CompPanel />
        <div className="w-[6px] shrink-0" />
        <div className="flex-1 flex flex-col min-w-0 gap-[7px] h-[612px]">
          <InfoPanel />
          <EffectsPanel />
        </div>
      </div>
      <div className="h-[6px] shrink-0" />
      <Timeline />
      <div className="flex-1 bg-[#1d1d1d] border-t border-[#0e0e0e]" />
    </div>
  )
}
